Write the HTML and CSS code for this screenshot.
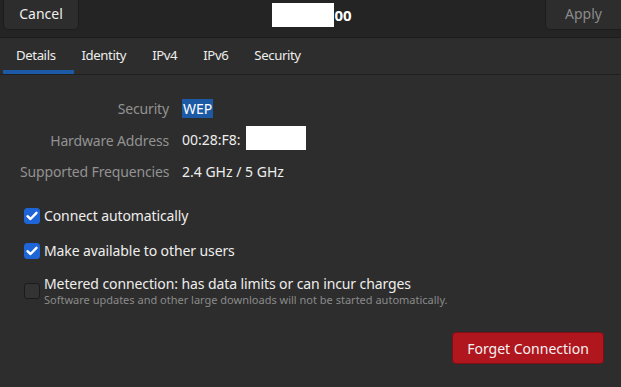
FILE: index.html
```html
<!DOCTYPE html>
<html lang="en">
<head>
    <meta charset="UTF-8">
    <title>Wi-Fi Connection</title>
    <link rel="stylesheet" href="styles.css">
</head>
<body>
    <div class="dialog">
        <!-- Header bar -->
        <div class="headerbar">
            <button class="btn-header">Cancel</button>
            <div class="title"><span class="redact"></span>00</div>
            <button class="btn-header btn-apply" disabled>Apply</button>
        </div>

        <!-- Tabs -->
        <div class="tabs">
            <div class="tab active">Details</div>
            <div class="tab">Identity</div>
            <div class="tab">IPv4</div>
            <div class="tab">IPv6</div>
            <div class="tab">Security</div>
        </div>

        <div class="content">
            <div class="details">
                <div class="label">Security</div>
                <div class="value"><span class="selected">WEP</span></div>
                <div class="label">Hardware Address</div>
                <div class="value">00:28:F8:<span class="redact-mac"></span></div>
                <div class="label">Supported Frequencies</div>
                <div class="value">2.4 GHz / 5 GHz</div>
            </div>

            <div class="options">
                <label class="check-row">
                    <span class="check checked"><svg viewBox="0 0 16 16" width="16" height="16"><path d="M3.5 8.2l3 2.8 6-6.2" fill="none" stroke="#fff" stroke-width="2.4" stroke-linecap="round" stroke-linejoin="round"/></svg></span>
                    <span class="check-text">Connect automatically</span>
                </label>
                <label class="check-row">
                    <span class="check checked"><svg viewBox="0 0 16 16" width="16" height="16"><path d="M3.5 8.2l3 2.8 6-6.2" fill="none" stroke="#fff" stroke-width="2.4" stroke-linecap="round" stroke-linejoin="round"/></svg></span>
                    <span class="check-text">Make available to other users</span>
                </label>
                <label class="check-row metered">
                    <span class="check"></span>
                    <span class="check-text">
                        Metered connection: has data limits or can incur charges
                        <small>Software updates and other large downloads will not be started automatically.</small>
                    </span>
                </label>
            </div>

            <div class="actions">
                <button class="btn-forget">Forget Connection</button>
            </div>
        </div>
    </div>
</body>
</html>
```

FILE: styles.css
```css
body {
    margin: 0;
    font-family: "Noto Sans", sans-serif;
    font-size: 14px;
    background-color: #2d2d2d;
    color: #eeeeec;
    width: 621px;
    height: 387px;
    overflow: hidden;
}
.dialog {
    display: flex;
    flex-direction: column;
    height: 387px;
}
.headerbar {
    display: flex;
    align-items: flex-start;
    justify-content: space-between;
    height: 37px;
    background-color: #242424;
    border-bottom: 1px solid #1b1b1b;
    padding: 0 0 0 3px;
}
.btn-header {
    font-family: inherit;
    font-size: 14px;
    color: #eeeeec;
    background-color: #2d2d2d;
    border: 1px solid #1c1c1c;
    border-top: none;
    border-radius: 0 0 5px 5px;
    height: 30px;
    width: 76px;
    padding: 0 0 2px;
}
.btn-apply {
    color: #8b8b8b;
    width: 76px;
    border-right: none;
    border-radius: 0 0 0 5px;
}
.title {
    display: flex;
    align-items: center;
    height: 30px;
    font-weight: bold;
    font-size: 15px;
    color: #ffffff;
}
.redact {
    display: inline-block;
    width: 62px;
    height: 24px;
    background: #ffffff;
}
.tabs {
    display: flex;
    height: 36px;
    padding-left: 3px;
    border-bottom: 1px solid #202020;
}
.tab {
    position: relative;
    display: flex;
    align-items: center;
    padding: 0 13px 2px;
    color: #eeeeec;
    font-size: 13.2px;
    letter-spacing: -0.4px;
}
.tab.active::after {
    content: "";
    position: absolute;
    left: 0;
    bottom: 0;
    width: 71px;
    height: 4px;
    background-color: #1c5aa6;
}
.content {
    flex: 1;
    display: flex;
    flex-direction: column;
    padding: 0 17px 0 24px;
}
.details {
    display: grid;
    grid-template-columns: 149px auto;
    column-gap: 13px;
    row-gap: 13px;
    margin-top: 25px;
    margin-left: -4px;
    align-items: center;
}
.label {
    text-align: right;
    color: #929292;
    white-space: nowrap;
    line-height: 18px;
    letter-spacing: -0.15px;
}
.value {
    color: #eeeeec;
    line-height: 18px;
}
.selected {
    background-color: #1c5aa6;
    color: #ffffff;
    padding: 0 1px;
}
.redact-mac {
    display: inline-block;
    width: 60px;
    height: 24px;
    margin-left: 5px;
    background: #ffffff;
    vertical-align: middle;
    margin-top: -6px;
}
.options {
    display: flex;
    flex-direction: column;
    gap: 15px;
    margin-top: 25px;
}
.check-row {
    display: flex;
    align-items: center;
    gap: 4px;
}
.metered {
    margin-top: -1px;
}
.check {
    flex: none;
    width: 16px;
    height: 16px;
    border-radius: 3px;
    box-sizing: border-box;
    border: 1px solid #1b1b1b;
    background-color: #333333;
}
.check.checked {
    background-color: #1e66d8;
    border-color: #1e66d8;
}
.check svg {
    display: block;
    margin: -1px;
}
.check-text {
    line-height: 20px;
    letter-spacing: -0.1px;
}
.metered .check-text {
    line-height: 18px;
}
.check-text small {
    display: block;
    font-size: 11px;
    line-height: 14px;
    color: #8a8a8a;
    letter-spacing: 0;
}
.actions {
    display: flex;
    justify-content: flex-end;
    margin-top: auto;
    margin-bottom: 23px;
}
.btn-forget {
    font-family: inherit;
    font-size: 14px;
    color: #f2f2f2;
    background-color: #b0161e;
    border: 1px solid #7e0f14;
    border-radius: 4px;
    height: 32px;
    width: 152px;
}
```
